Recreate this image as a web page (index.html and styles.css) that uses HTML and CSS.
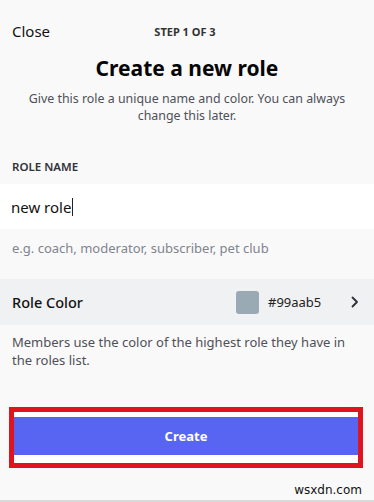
FILE: index.html
```html
<!DOCTYPE html>
<html>
<head>
<meta charset="utf-8">
<link rel="stylesheet" href="styles.css">
</head>
<body>
<div class="page">
  <header class="topbar">
    <span class="close">Close</span>
    <span class="step">STEP 1 OF 3</span>
  </header>
  <h1 class="title">Create a new role</h1>
  <p class="subtitle">Give this role a unique name and color. You can always change this later.</p>

  <div class="label">ROLE NAME</div>
  <div class="input"><span class="value">new role</span><span class="caret"></span></div>
  <div class="hint">e.g. coach, moderator, subscriber, pet club</div>

  <div class="color-row">
    <span class="row-label">Role Color</span>
    <span class="swatch"></span>
    <span class="hex">#99aab5</span>
    <svg class="chev" width="10" height="12" viewBox="0 0 10 12"><path d="M2.5 1.5 L7 6 L2.5 10.5" fill="none" stroke="#2e3035" stroke-width="1.8" stroke-linecap="round" stroke-linejoin="round"/></svg>
  </div>
  <p class="desc">Members use the color of the highest role they have in the roles list.</p>

  <div class="highlight">
    <button class="create">Create</button>
  </div>

  <footer class="foot"><span class="mark">wsxdn.com</span></footer>
</div>
</body>
</html>
```

FILE: styles.css
```css
html, body {
  margin: 0;
  padding: 0;
  background: #f9f9f9;
}
body {
  font-family: "Noto Sans", "Open Sans", sans-serif;
  color: #060607;
  width: 374px;
  height: 502px;
  overflow: hidden;
}
.page {
  display: flex;
  flex-direction: column;
  height: 502px;
}
.topbar {
  display: flex;
  align-items: center;
  padding: 20px 12px 0 12px;
  height: 22px;
}
.close {
  font-size: 15px;
  color: #111;
  width: 60px;
}
.step {
  flex: 1;
  text-align: center;
  font-size: 11px;
  font-weight: 700;
  color: #333;
  margin-right: 60px;
  padding-right: 4px;
}
.title {
  margin: 12px 0 0 0;
  font-size: 21px;
  font-weight: 700;
  text-align: center;
  line-height: 28px;
  color: #060607;
}
.subtitle {
  margin: 8px 20px 0 20px;
  font-size: 12.4px;
  line-height: 17px;
  text-align: center;
  color: #4f5058;
}
.label {
  margin: 36px 12px 0 12px;
  font-size: 11.5px;
  font-weight: 600;
  color: #313338;
  line-height: 14px;
}
.input {
  margin-top: 10px;
  height: 45px;
  background: #ffffff;
  display: flex;
  align-items: center;
  padding-left: 11px;
}
.value {
  font-size: 15px;
  color: #111;
}
.caret {
  display: inline-block;
  width: 1px;
  height: 18px;
  background: #222;
  margin-left: 1px;
}
.hint {
  margin: 11px 12px 0 12px;
  font-size: 13px;
  color: #80848e;
  line-height: 16px;
}
.color-row {
  margin-top: 23px;
  height: 46px;
  background: #f0f1f3;
  display: flex;
  align-items: center;
  padding: 0 14px 0 12px;
}
.row-label {
  flex: 1;
  font-size: 14.5px;
  font-weight: 500;
  color: #111;
}
.swatch {
  width: 23px;
  height: 23px;
  border-radius: 3px;
  background: #99aab5;
}
.hex {
  margin-left: 9px;
  font-size: 13px;
  color: #222;
  width: 74px;
}
.chev {
  margin-left: 8px;
}
.desc {
  margin: 8px 12px 0 12px;
  font-size: 13px;
  line-height: 18px;
  color: #4f5058;
}
.highlight {
  margin: 38px 11px 0 9px;
  border: 5px solid #e0141e;
  background: #ffffff;
  padding: 5px 0 8px 0;
}
.create {
  display: block;
  width: 100%;
  height: 38px;
  border: none;
  background: #5865f2;
  color: #ffffff;
  font-family: "Noto Sans", "Open Sans", sans-serif;
  font-size: 13px;
  font-weight: 700;
  padding: 0;
}
.foot {
  flex: 1;
  display: flex;
  justify-content: flex-end;
  align-items: flex-end;
  border-bottom: 2px solid #d9d9d9;
  padding: 0 12px 3px 0;
}
.mark {
  font-family: "DejaVu Sans", sans-serif;
  font-size: 12px;
  color: #111;
}
```
